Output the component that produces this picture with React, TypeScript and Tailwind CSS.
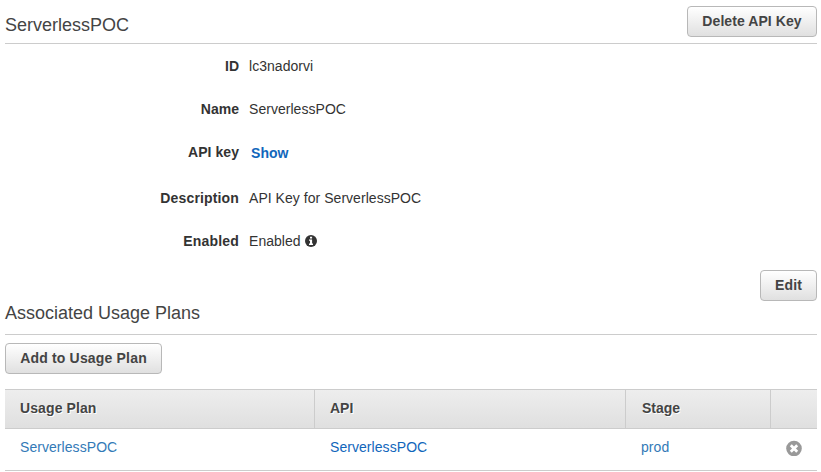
import type { ReactNode } from "react";

function InfoIcon() {
  return (
    <svg viewBox="0 0 12 12" className="ml-1 size-3 text-[#333]" aria-hidden="true">
      <circle cx="6" cy="6" r="6" fill="currentColor" />
      <path fill="#fff" d="M5 1.7h2.1v1.8H5zM4 4.5h3.1v4.1H8V10H4V8.6h1V5.8H4z" />
    </svg>
  );
}

function RemoveIcon() {
  return (
    <svg viewBox="0 0 16 16" className="size-4 text-[#999]" aria-hidden="true">
      <circle cx="8" cy="8.5" r="7.8" fill="currentColor" />
      <path stroke="#fff" strokeWidth="2.8" d="M4.8 5.3l6.4 6.4M11.2 5.3l-6.4 6.4" />
    </svg>
  );
}

function Button({ children, className = "" }: { children: ReactNode; className?: string }) {
  return (
    <button
      className={`h-[31px] shrink-0 whitespace-nowrap rounded-[4px] border border-[#b8b8b8] bg-linear-to-b from-white to-[#e0e0e0] pb-px text-center text-[14px] leading-[28px] font-bold text-[#444] ${className}`}
    >
      {children}
    </button>
  );
}

function Field({ label, className, labelClass, children }: { label: string; className: string; labelClass: string; children: ReactNode }) {
  return (
    <div className={`flex items-start text-[14px] leading-5 ${className}`}>
      <dt className="w-[234px] text-right font-bold">
        <span className={labelClass}>{label}</span>
      </dt>
      <dd className="ml-[10px] flex items-center tracking-[0.04px]">{children}</dd>
    </div>
  );
}

export default function App() {
  return (
    <main className="h-[472px] w-[821px] overflow-hidden bg-white pl-[5px] pr-1 font-['Liberation_Sans',Arial,sans-serif] text-[#333]">
      <header className="flex h-11 justify-between border-b border-[#ccc] pt-[6px]">
        <h1 className="mt-[7px] text-[18px] leading-6 text-[#444]">ServerlessPOC</h1>
        <Button className="w-[130px] tracking-[0.07px]">Delete API Key</Button>
      </header>

      <dl className="h-[226px] pt-3">
        <Field label="ID" className="h-[43px]" labelClass="">lc3nadorvi</Field>
        <Field label="Name" className="h-[43px]" labelClass="">ServerlessPOC</Field>
        <Field label="API key" className="h-[46px]" labelClass="tracking-[0.05px]">
          <a href="#" className="relative top-px pl-[2px] font-bold text-[#1166bb]">Show</a>
        </Field>
        <Field label="Description" className="h-[43px]" labelClass="tracking-[0.15px]">API Key for ServerlessPOC</Field>
        <Field label="Enabled" className="h-5" labelClass="tracking-[0.2px]">
          Enabled
          <InfoIcon />
        </Field>
      </dl>

      <div className="flex h-[31px] justify-end">
        <Button className="w-[57px] tracking-[0.2px]">Edit</Button>
      </div>
      <h2 className="h-[34px] border-b border-[#ccc] text-[18px] leading-6 text-[#444]">Associated Usage Plans</h2>
      <div className="h-[54px] pt-2">
        <Button className="w-[157px] tracking-[0.18px]">Add to Usage Plan</Button>
      </div>

      <table className="w-full table-fixed border-separate border-spacing-0 text-left text-[14px] leading-5">
        <colgroup>
          <col className="w-[310px]" />
          <col className="w-[311px]" />
          <col className="w-[145px]" />
          <col />
        </colgroup>
        <thead>
          <tr className="h-10 bg-linear-to-b from-[#eee] to-[#dfdfdf] text-[#444] [text-shadow:1px_1px_0_#fff]">
            <th className="border-y border-r border-[#ccc] p-0 pb-[2px] pl-[15px] tracking-[0.1px]">Usage Plan</th>
            <th className="border-y border-r border-[#ccc] p-0 pb-[2px] pl-[15px]">API</th>
            <th className="border-y border-r border-[#ccc] p-0 pb-[2px] pl-4">Stage</th>
            <th className="border-y border-[#ccc] p-0" />
          </tr>
        </thead>
        <tbody>
          <tr className="h-[42px] align-top tracking-[0.06px]">
            <td className="border-b border-[#ccc] p-0 pt-2 pl-[15px] text-[#337ab7]">ServerlessPOC</td>
            <td className="border-b border-[#ccc] p-0 pt-2 pl-[15px] text-[#1166bb]">ServerlessPOC</td>
            <td className="border-b border-[#ccc] p-0 pt-2 pl-[15px] text-[#337ab7]">prod</td>
            <td className="border-b border-[#ccc] p-0 pt-[11px] pl-[15px]">
              <RemoveIcon />
            </td>
          </tr>
        </tbody>
      </table>
    </main>
  );
}
